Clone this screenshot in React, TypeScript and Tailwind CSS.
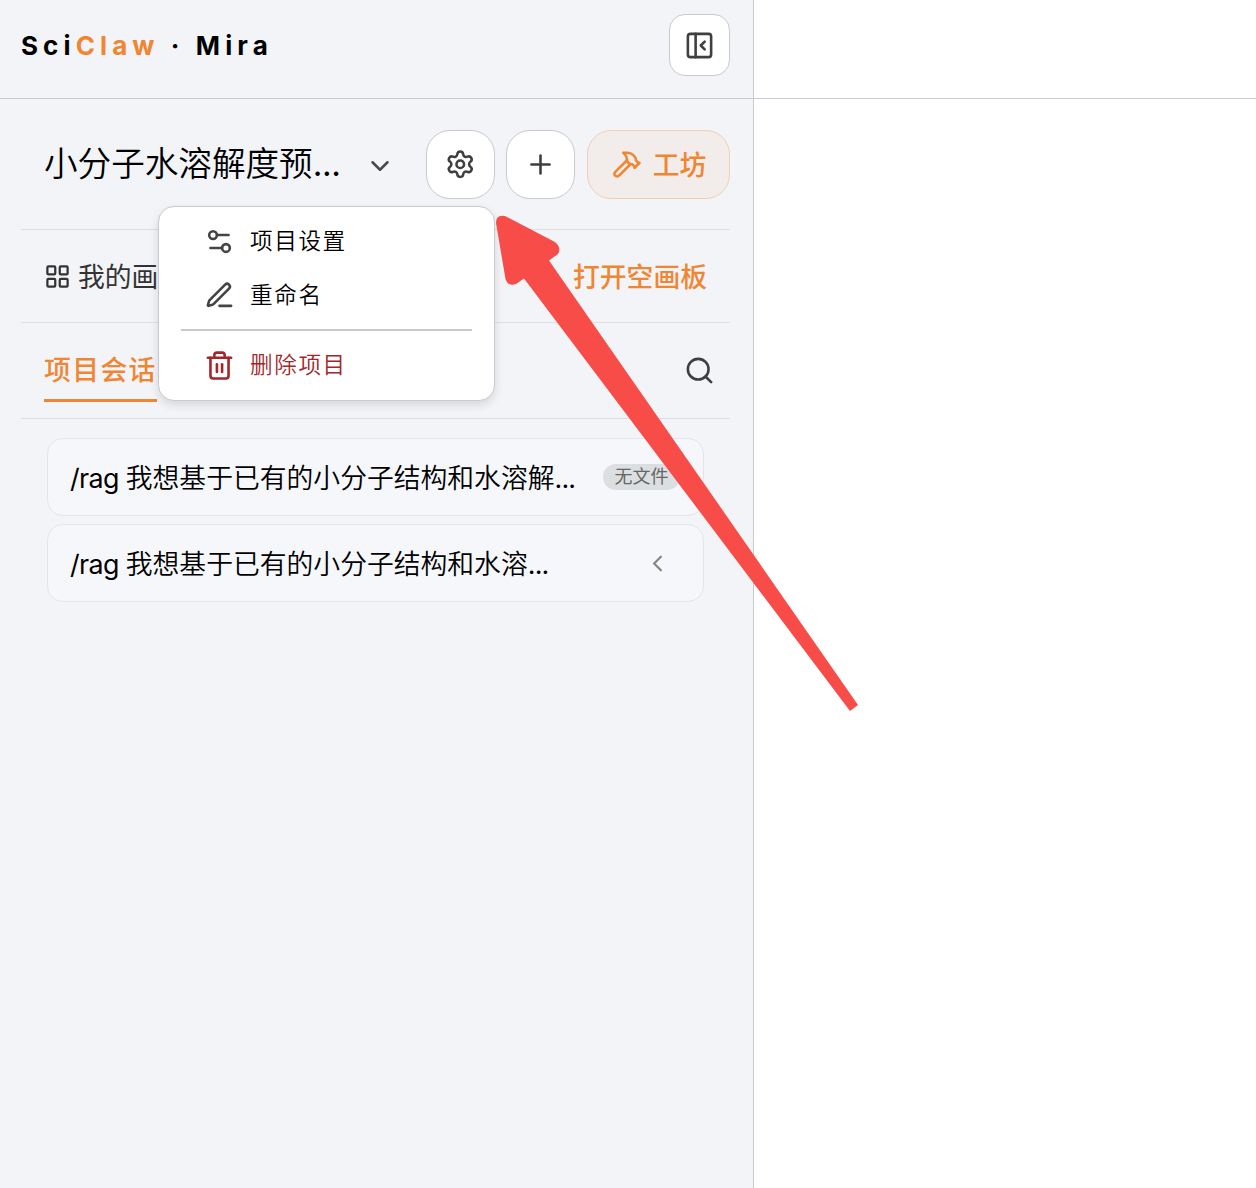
import React from "react";
import {
  ChevronDown,
  ChevronLeft,
  Hammer,
  LayoutGrid,
  PanelLeftClose,
  Plus,
  Search,
  Settings,
  Settings2,
  Trash2,
} from "lucide-react";

function RenameIcon() {
  return (
    <svg
      width="31"
      height="31"
      viewBox="0 0 24 24"
      fill="none"
      stroke="currentColor"
      strokeWidth="2"
      strokeLinecap="round"
      strokeLinejoin="round"
    >
      <path d="M12 20h9" />
      <path d="M16.376 3.622a1 1 0 0 1 3.002 3.002L7.368 18.635a2 2 0 0 1-.855.506l-2.872.838a.5.5 0 0 1-.62-.62l.838-2.872a2 2 0 0 1 .506-.854z" />
    </svg>
  );
}

function MenuItem({
  icon,
  label,
  danger = false,
}: {
  icon: React.ReactNode;
  label: string;
  danger?: boolean;
}) {
  return (
    <button
      className={
        "flex h-[54px] w-full items-center gap-[15px] pl-[23px] text-left " +
        (danger ? "text-[#a3262a]" : "text-[#444444]")
      }
    >
      {icon}
      <span
        className={
          "text-[22.6px] leading-8 font-[350] tracking-[1.6px] " +
          (danger ? "text-[#a3262a]" : "text-black")
        }
      >
        {label}
      </span>
    </button>
  );
}

function ProjectMenu() {
  return (
    <div className="absolute left-[158px] top-[206px] z-10 h-[195px] w-[337px] rounded-2xl border border-[#c9c9d0] bg-white px-[22px] pt-[7px] shadow-[0_4px_10px_rgba(0,0,0,0.12)]">
      <MenuItem icon={<Settings2 size={31} strokeWidth={2} />} label="项目设置" />
      <MenuItem icon={<RenameIcon />} label="重命名" />
      <div className="mt-[7px] mb-[7px] h-[2px] bg-[#c9c9d0]" />
      <MenuItem danger icon={<Trash2 size={31} strokeWidth={2} />} label="删除项目" />
    </div>
  );
}

function SessionCard({ title, children }: { title: string; children: React.ReactNode }) {
  return (
    <div className="flex h-[78px] items-center justify-between rounded-2xl border border-[#e4e5ea] bg-[#f6f7fa] pr-[23px] pl-[22px]">
      <span className="whitespace-nowrap pt-px text-[26.8px] leading-9 text-black">
        <span className="tracking-[-0.6px]">/rag </span>
        <span className="font-[350]">{title}</span>
        <span className="tracking-[-0.8px]">...</span>
      </span>
      {children}
    </div>
  );
}

function Pointer() {
  return (
    <svg
      className="pointer-events-none absolute left-0 top-0 z-20"
      width="1256"
      height="1188"
      viewBox="0 0 1256 1188"
    >
      <path
        fill="#f84c48"
        d="M496 223Q496 214 505 216L554 241.500Q562 247 558 254L549 260.500L858 705L850 711L524 278.500L516 284Q508 287 505.500 279Z"
      />
    </svg>
  );
}

export default function App() {
  return (
    <div className="relative flex h-[1188px] w-[1256px] overflow-hidden bg-white font-[Inter,'Noto_Sans_CJK_SC',sans-serif] text-black">
      <aside className="flex w-[754px] shrink-0 flex-col border-r border-[#c9c9d0] bg-[#f2f4f8]">
        <header className="flex h-[99px] items-start justify-between border-b border-[#c9c9d0] pt-[14px] pr-[23px] pl-[21px]">
          <h1 className="whitespace-nowrap text-[26px] leading-[63px] font-bold tracking-[5.1px]">
            Sci<span className="text-[#f08532]">Claw</span> · Mira
          </h1>
          <button className="flex h-[62px] w-[61px] items-center justify-center rounded-2xl border border-[#c9c9d0] bg-white text-[#3f3f3f]">
            <PanelLeftClose size={31} strokeWidth={2} />
          </button>
        </header>

        <div className="flex flex-col pr-[23px] pl-[21px]">
          <div className="flex h-[131px] items-center border-b border-[#dcdde2]">
            <span className="w-[321px] whitespace-nowrap pl-[23px] text-[33.6px] leading-[48px] font-[350]">
              小分子水溶解度预<span className="font-normal tracking-[-0.4px]">...</span>
            </span>
            <ChevronDown className="mt-[3px] ml-[23px] text-[#4a4a4a]" size={30} strokeWidth={2} />
            <div className="ml-auto flex gap-[11px]">
              <button className="flex size-[69px] items-center justify-center rounded-3xl border border-[#c9c9d0] bg-white text-[#3f3f3f]">
                <Settings size={30.5} strokeWidth={2} />
              </button>
              <button className="flex size-[69px] items-center justify-center rounded-3xl border border-[#c9c9d0] bg-white text-[#3f3f3f]">
                <Plus size={31} strokeWidth={2} />
              </button>
              <button className="ml-px flex h-[69px] w-[143px] items-center justify-center gap-[11px] rounded-3xl border border-[#f3cfb5] bg-[#f2ecea] pl-px text-[26.8px] font-medium text-[#f08532]">
                <Hammer size={30} strokeWidth={2} />
                <span className="pt-0.5">工坊</span>
              </button>
            </div>
          </div>

          <div className="flex h-[93px] items-center justify-between border-b border-[#dfe0e5] px-[23px] text-[26.8px]">
            <span className="flex items-center gap-[7px] text-[#333333]">
              <LayoutGrid size={27} strokeWidth={2} />
              <span className="pt-0.5">我的画板</span>
            </span>
            <button className="pt-0.5 font-medium text-[#f08532]">打开空画板</button>
          </div>

          <div className="flex h-24 items-center justify-between border-b border-[#dcdde2] pr-[15px] pl-[23px]">
            <button className="h-[63px] border-b-[3px] border-[#f08532] pt-[3px] text-[26.8px] leading-[33px] font-medium tracking-[1.4px] text-[#f08532]">
              项目会话
            </button>
            <Search className="text-[#3f3f3f]" size={31} strokeWidth={2} />
          </div>
        </div>

        <div className="flex flex-col gap-2 pt-[19px] pr-[49px] pl-[47px]">
          <SessionCard title="我想基于已有的小分子结构和水溶解">
            <span className="flex h-[26px] w-[77px] items-center justify-center rounded-full bg-[#dcdfe2] text-[18px] leading-none text-[#666666]">
              无文件
            </span>
          </SessionCard>
          <SessionCard title="我想基于已有的小分子结构和水溶">
            <ChevronLeft className="mr-[9px] text-[#858585]" size={27} strokeWidth={2} />
          </SessionCard>
        </div>
      </aside>

      <main className="flex grow flex-col">
        <div className="h-[99px] border-b border-[#c9c9d0]" />
      </main>

      <ProjectMenu />
      <Pointer />
    </div>
  );
}
